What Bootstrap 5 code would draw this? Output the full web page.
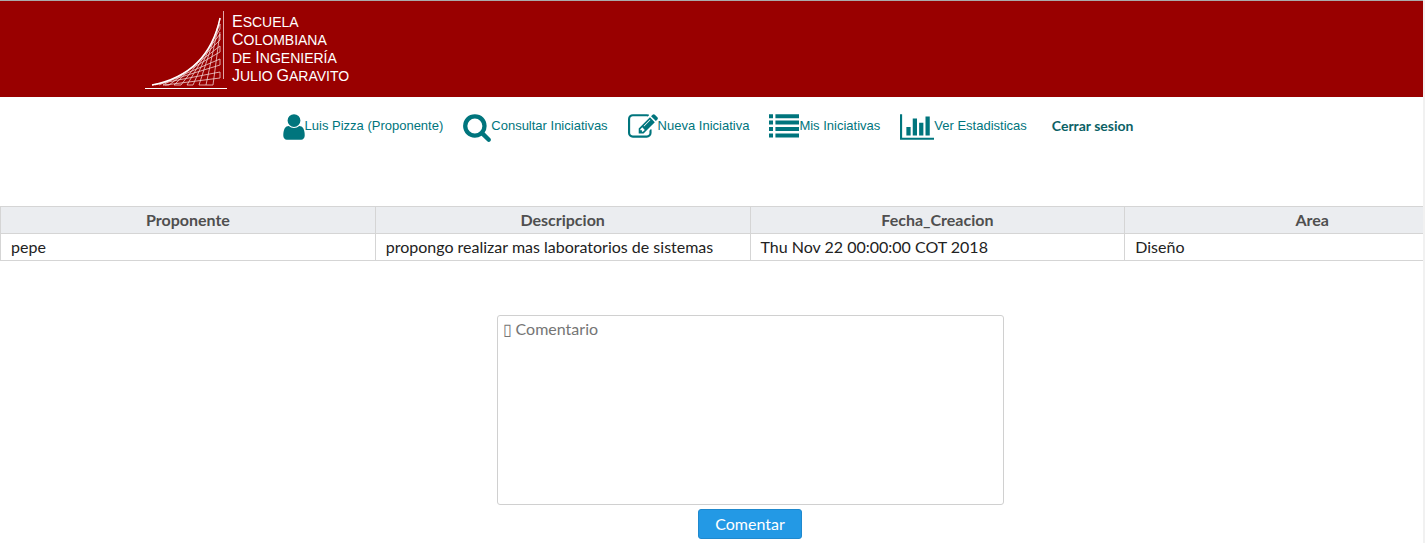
<!DOCTYPE html>
<html lang="es">
<head>
<meta charset="utf-8">
<meta name="viewport" content="width=device-width, initial-scale=1">
<title>Iniciativas - Comentar</title>
<link href="https://cdn.jsdelivr.net/npm/bootstrap@5.3.0/dist/css/bootstrap.min.css" rel="stylesheet">
<style>
  body { font-family: Lato, "Open Sans", sans-serif; font-size: 16px; line-height: 20px; color: #222; border-right: 2px solid #f1f1f1; min-height: 100vh; }
  .site-header { background: #900; border-top: 1px solid #aaa; height: 97px; padding: 9px 0 0 145px; }
  .brand-name { font: 14px/18px "Liberation Sans", Arial, sans-serif; color: #fff; padding-top: 3px; }
  .brand-name b { font-weight: 400; font-size: 16px; line-height: 16px; }
  .main-menu { gap: 20px; padding: 15px 7px 0 0; }
  .menu-link { font: 13px/28px "Liberation Sans", Arial, sans-serif; color: #00757d; text-decoration: none; }
  .menu-link svg { height: 30px; fill: currentColor; flex: none; }
  .logout { font: 700 14px/28px Lato, sans-serif; color: #0b6165; text-decoration: none; padding-left: 5px; }
  .wide-content { width: calc(100% + 77px); padding-top: 64px; }
  .data-grid { table-layout: fixed; border-collapse: collapse; }
  .data-grid th, .data-grid td { border: 1px solid #d5d5d5; padding: 3px 10px; }
  .data-grid th { background: #ebedf0; color: #4f4f4f; text-align: center; }
  .comment-form { padding-top: 54px; }
  .comment-box { width: 507px; height: 190px; padding: 3px 5px; border: 1px solid #d0d0d0; border-radius: 3px; font-size: 16px; line-height: 20px; resize: none; }
  .comment-box::placeholder { color: #757575; opacity: 1; }
  .btn-comment { --bs-btn-color: #fff; --bs-btn-bg: #2399e5; --bs-btn-border-color: #1f89ce; --bs-btn-hover-color: #fff; --bs-btn-hover-bg: #1f89ce; --bs-btn-padding-x: 16px; --bs-btn-padding-y: 4px; --bs-btn-line-height: 20px; --bs-btn-border-radius: 3px; }
</style>
</head>
<body>
<header class="site-header d-flex align-items-start">
  <svg width="87" height="80" viewBox="0 0 87 80" fill="none" stroke="#fff" aria-hidden="true">
    <path d="M0 78.500H82"/>
    <path d="M78.500 1V69" stroke="#e0a8a8"/>
    <path stroke="#f0d0d0" stroke-width=".8" d="M20 75L75 68V62L7 75M14 75L75 49V55L10 75M24 75L75 36V42L18 75H24M36 75L75 24V30L29 75H36M48 75L75 14V19L42 75H48M61 75L75 8V10L54 75H61M68 75L75 22M61 75H68"/>
    <path d="M7 75Q63 64 75 8" stroke-width="1.300"/>
  </svg>
  <div class="brand-name"><b>E</b>SCUELA<br><b>C</b>OLOMBIANA<br>DE <b>I</b>NGENIERÍA<br><b>J</b>ULIO <b>G</b>ARAVITO</div>
</header>

<nav class="main-menu d-flex justify-content-center" aria-label="Principal">
  <a class="menu-link d-flex" href="#"><svg width="22" viewBox="256 0 1280 1792" aria-hidden="true"><path d="M1536 1399q0 109-62.500 187t-150.500 78h-854q-88 0-150.500-78t-62.500-187q0-85 8.500-160.500t31.500-152 58.500-131 94-89 134.500-34.500q131 128 313 128t313-128q76 0 134.500 34.500t94 89 58.500 131 31.500 152 8.500 160.500zm-256-887q0 159-112.500 271.500t-271.500 112.500-271.500-112.500-112.500-271.500 112.500-271.500 271.500-112.500 271.500 112.500 112.500 271.500z"/></svg>Luis Pizza (Proponente)</a>
  <a class="menu-link d-flex" href="#"><svg width="28" viewBox="64 0 1664 1792" aria-hidden="true"><path d="M1216 832q0-185-131.500-316.500t-316.500-131.500-316.500 131.500-131.500 316.500 131.500 316.500 316.500 131.500 316.500-131.500 131.500-316.500zm512 832q0 52-38 90t-90 38q-54 0-90-38l-343-342q-179 124-399 124-143 0-273.500-55.500t-225-150-150-225-55.500-273.500 55.500-273.500 150-225 225-150 273.500-55.500 273.500 55.500 225 150 150 225 55.500 273.500q0 220-124 399l343 343q37 37 37 90z"/></svg>Consultar Iniciativas</a>
  <a class="menu-link d-flex" href="#"><svg width="30" viewBox="0 0 1792 1792" aria-hidden="true"><path d="M888 1184l116-116-152-152-116 116v56h96v96h56zm440-720q-16-16-33 1l-350 350q-17 17-1 33t33-1l350-350q17-17 1-33zm80 594v190q0 119-84.500 203.500t-203.500 84.500h-832q-119 0-203.500-84.500t-84.500-203.500v-832q0-119 84.500-203.500t203.500-84.500h832q63 0 117 25 15 7 18 23 3 17-9 29l-49 49q-14 14-32 8-23-6-45-6h-832q-66 0-113 47t-47 113v832q0 66 47 113t113 47h832q66 0 113-47t47-113v-126q0-13 9-22l64-64q15-15 35-7t20 29zm-96-738l288 288-672 672h-288v-288zm444 132l-92 92-288-288 92-92q28-28 68-28t68 28l152 152q28 28 28 68t-28 68z"/></svg>Nueva Iniciativa</a>
  <a class="menu-link d-flex" href="#"><svg width="30" viewBox="0 0 1792 1792" aria-hidden="true"><path d="M0 128h240v240H0zM384 128h1408v240H384zM0 512h240v240H0zM384 512h1408v240H384zM0 896h240v240H0zM384 896h1408v240H384zM0 1280h240v240H0zM384 1280h1408v240H384z"/></svg>Mis Iniciativas</a>
  <a class="menu-link d-flex" href="#"><svg width="34" viewBox="0 0 2048 1792" aria-hidden="true"><path d="M2048 1536v128H0V128h128v1408zM384 896h256v512H384zM768 384h256v1024H768zM1152 640h256v768h-256zM1536 256h256v1152h-256z"/></svg>Ver Estadisticas</a>
  <a class="logout" href="#">Cerrar sesion</a>
</nav>

<div class="overflow-hidden">
  <main class="wide-content">
    <table class="data-grid w-100">
      <thead><tr><th scope="col">Proponente</th><th scope="col">Descripcion</th><th scope="col">Fecha_Creacion</th><th scope="col">Area</th></tr></thead>
      <tbody><tr><td>pepe</td><td>propongo realizar mas laboratorios de sistemas</td><td>Thu Nov 22 00:00:00 COT 2018</td><td>Diseño</td></tr></tbody>
    </table>
    <form class="comment-form d-flex flex-column align-items-center gap-1">
      <textarea class="comment-box" aria-label="Comentario" placeholder="&#9647; Comentario"></textarea>
      <button class="btn btn-comment" type="button">Comentar</button>
    </form>
  </main>
</div>
<script src="https://cdn.jsdelivr.net/npm/bootstrap@5.3.0/dist/js/bootstrap.bundle.min.js"></script>
</body>
</html>
